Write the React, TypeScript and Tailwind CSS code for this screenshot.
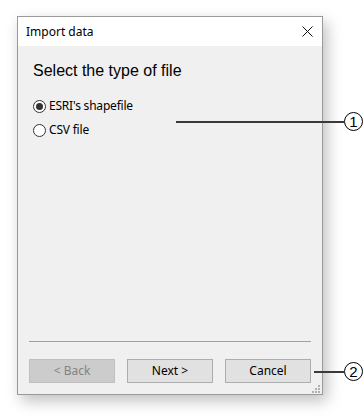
import React from 'react';

const ui = { fontFamily: '"Noto Sans", "Liberation Sans", sans-serif' };

function Radio({ checked, label }: { checked?: boolean; label: string }) {
  return (
    <label className="flex h-[24px] items-center gap-[3px] text-[12px] text-black" style={ui}>
      <span className="flex h-[13px] w-[13px] items-center justify-center rounded-full border border-[#333333] bg-white">
        {checked && <span className="h-[7px] w-[7px] rounded-full bg-[#333333]" />}
      </span>
      <span className="tracking-[-0.2px]">{label}</span>
    </label>
  );
}

function Button({ children, disabled }: { children: React.ReactNode; disabled?: boolean }) {
  return (
    <button
      className={`h-[24px] w-[86px] border text-[12px] ${
        disabled ? 'border-[#bfbfbf] bg-[#cccccc] text-[#838383]' : 'border-[#adadad] bg-[#e1e1e1] text-black'
      }`}
      style={ui}
    >
      {children}
    </button>
  );
}

function Callout({ n, top }: { n: string; top: number }) {
  return (
    <div
      className="absolute left-[344px] flex h-[19px] w-[19px] items-center justify-center rounded-full border-[1.5px] border-black bg-white text-[15px] leading-none text-black"
      style={{ top, fontFamily: '"Liberation Sans", Arial, sans-serif' }}
    >
      {n}
    </div>
  );
}

export default function App() {
  return (
    <div className="relative h-[418px] w-[364px] overflow-hidden bg-white pt-[16px] pl-[17px]">
      <div className="flex h-[379px] w-[306px] flex-col border border-[#9a9a9a] bg-[#f0f0f0] shadow-[4px_6px_14px_rgba(0,0,0,0.25)]">
        <div className="flex h-[29px] items-center justify-between bg-white pl-[8px] pr-[9px]">
          <span className="text-[12px] text-black" style={ui}>Import data</span>
          <svg width="11" height="11" viewBox="0 0 11 11">
            <path d="M0.5 0.5 L10.5 10.5 M10.5 0.5 L0.5 10.5" stroke="#111" strokeWidth="1" />
          </svg>
        </div>

        <div className="flex flex-1 flex-col px-[11px] pb-[11px]">
          <h1
            className="mt-[16px] pl-[4px] text-[16px] leading-[18px] text-black"
            style={{ fontFamily: '"Liberation Sans", Arial, sans-serif' }}
          >
            Select the type of file
          </h1>
          <div className="mt-[14px] flex flex-col pl-[4px]">
            <Radio checked label="ESRI's shapefile" />
            <Radio label="CSV file" />
          </div>

          <div className="mt-auto border-b border-[#a0a0a0]" />
          <div className="relative mt-[17px] flex justify-center gap-[12px]">
            <Button disabled>&lt; Back</Button>
            <Button>Next &gt;</Button>
            <Button>Cancel</Button>
          </div>
        </div>
      </div>

      {/* grip */}
      <svg className="absolute left-[311px] top-[384px]" width="10" height="10" viewBox="0 0 10 10">
        <g fill="#b0b0b0">
          <rect x="7" y="1" width="2" height="2" />
          <rect x="4" y="4" width="2" height="2" />
          <rect x="7" y="4" width="2" height="2" />
          <rect x="1" y="7" width="2" height="2" />
          <rect x="4" y="7" width="2" height="2" />
          <rect x="7" y="7" width="2" height="2" />
        </g>
      </svg>

      {/* annotation lines */}
      <div className="absolute left-[176px] top-[121px] h-[2px] w-[168px] bg-[#3a3a3a]" />
      <div className="absolute left-[314px] top-[371px] h-[2px] w-[30px] bg-[#3a3a3a]" />
      <Callout n="1" top={112} />
      <Callout n="2" top={362} />
    </div>
  );
}
